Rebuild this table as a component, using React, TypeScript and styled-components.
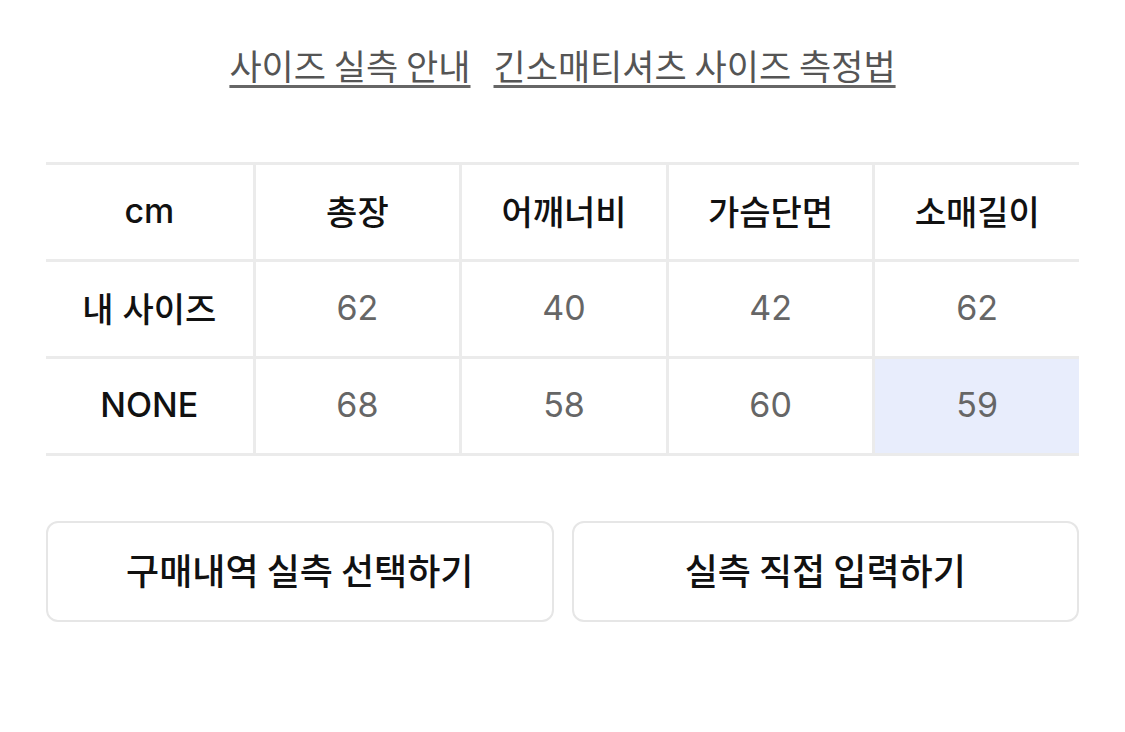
import React from "react";
import styled, { createGlobalStyle } from "styled-components";

const Global = createGlobalStyle`
  html, body { margin: 0; padding: 0; background: #fff; }
  body { font-family: Inter, "Noto Sans CJK KR", sans-serif; }
`;

const Page = styled.div`
  padding: 0 46px;
  display: flex;
  flex-direction: column;
`;

const Links = styled.div`
  display: flex;
  justify-content: center;
  gap: 23px;
  padding-top: 43px;
  height: 162px;
  box-sizing: border-box;
`;

const LinkText = styled.a`
  font-family: "Noto Sans CJK KR", sans-serif;
  font-size: 35px;
  line-height: 44px;
  color: #555;
  text-decoration: underline;
  text-decoration-thickness: 3px;
  text-underline-offset: 5px;
  text-decoration-color: #666;
  cursor: pointer;
`;

const Grid = styled.div`
  display: grid;
  grid-template-columns: repeat(5, 1fr);
  border-top: 3px solid #ebebeb;
`;

const Cell = styled.div<{ $first?: boolean; $strong?: boolean; $hl?: boolean }>`
  height: 97px;
  padding-bottom: 4px;
  box-sizing: border-box;
  display: flex;
  align-items: center;
  justify-content: center;
  border-bottom: 3px solid #ebebeb;
  border-left: ${(p) => (p.$first ? "none" : "3px solid #ebebeb")};
  background: ${(p) => (p.$hl ? "#e8edfc" : "#fff")};
  font-family: Inter, "Noto Sans CJK KR", sans-serif;
  font-size: 34px;
  font-weight: ${(p) => (p.$strong ? 500 : 400)};
  color: ${(p) => (p.$strong ? "#111" : "#666")};
`;

const Buttons = styled.div`
  display: grid;
  grid-template-columns: 1fr 1fr;
  gap: 18px;
  margin-top: 65px;
`;

const Button = styled.button`
  height: 101px;
  padding: 0 0 6px;
  background: #fff;
  border: 2px solid #e6e6e6;
  border-radius: 12px;
  font-family: "Noto Sans CJK KR", sans-serif;
  font-size: 36px;
  font-weight: 500;
  color: #111;
  cursor: pointer;
`;

const headers = ["cm", "총장", "어깨너비", "가슴단면", "소매길이"];
const rows = [
  ["내 사이즈", "62", "40", "42", "62"],
  ["NONE", "68", "58", "60", "59"],
];

export default function App() {
  return (
    <Page>
      <Global />
      <Links>
        <LinkText>사이즈 실측 안내</LinkText>
        <LinkText>긴소매티셔츠 사이즈 측정법</LinkText>
      </Links>
      <Grid>
        {headers.map((h, i) => (
          <Cell key={h} $strong $first={i === 0}>
            {h}
          </Cell>
        ))}
        {rows.map((r, ri) =>
          r.map((v, i) => (
            <Cell
              key={`${ri}-${i}`}
              $strong={i === 0}
              $first={i === 0}
              $hl={ri === 1 && i === 4}
            >
              {v}
            </Cell>
          ))
        )}
      </Grid>
      <Buttons>
        <Button>구매내역 실측 선택하기</Button>
        <Button>실측 직접 입력하기</Button>
      </Buttons>
    </Page>
  );
}
